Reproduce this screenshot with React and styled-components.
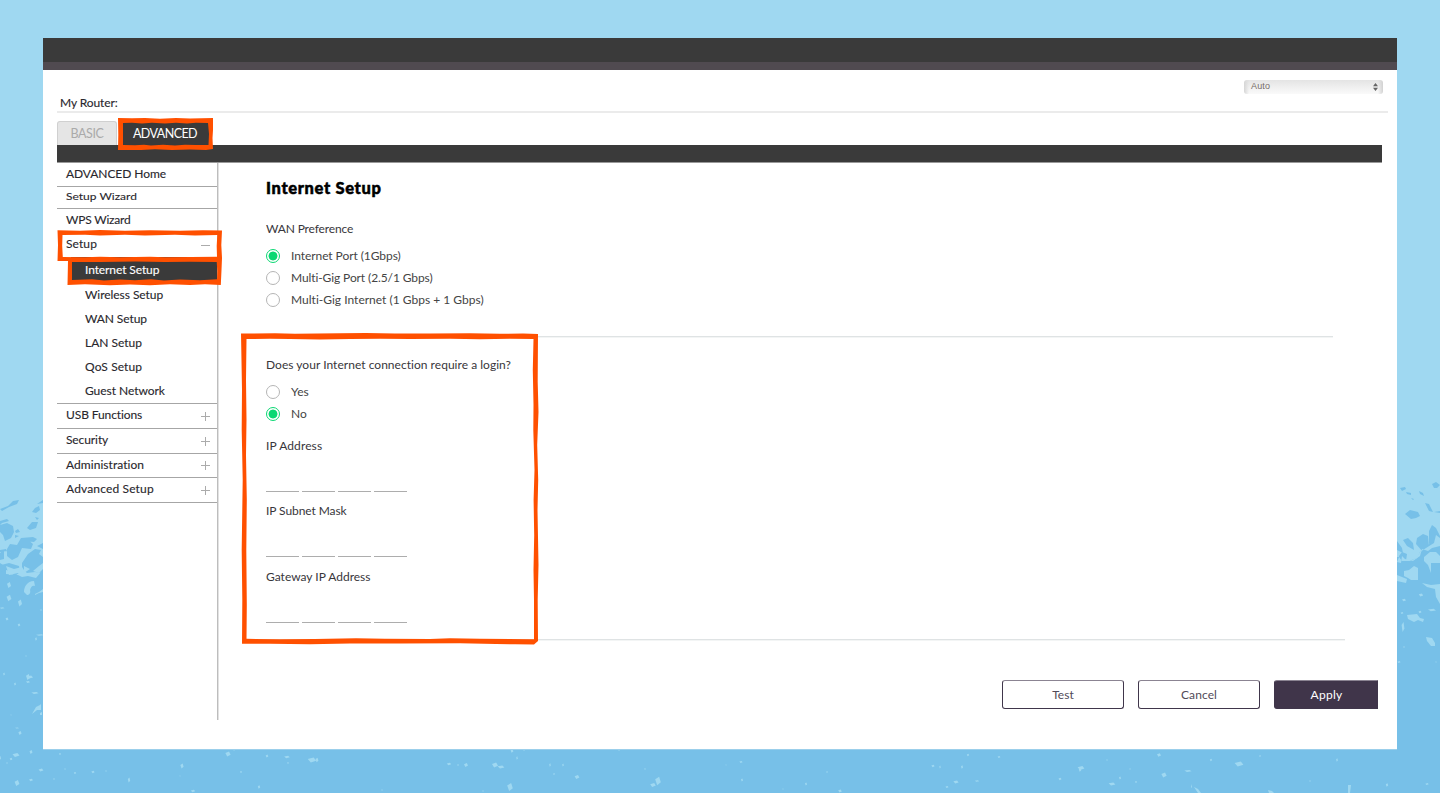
import React from "react";
import styled, { createGlobalStyle, css } from "styled-components";

const GlobalStyle = createGlobalStyle`
  *, *::before, *::after { box-sizing: border-box; }
  body { margin: 0; font-family: Lato, "Liberation Sans", sans-serif; }
`;

const ink = "#29272d";
const orange = "#ff5000";

const Scene = styled.main`
  position: relative;
  width: 1440px;
  height: 793px;
  padding: 38px 43px 44px;
  background: #9fd8f1;
  overflow: hidden;
`;

const Backdrop = styled.svg`
  position: absolute;
  inset: 0;
`;

const Frame = styled.div`
  position: relative;
  height: 711px;
  display: flex;
  flex-direction: column;
  background: #fff;
  box-shadow: 0 1px 0 #9bcfeb;
`;

const TopStrip = styled.div`
  height: 32px;
  background: #3a3a3a;
  border-bottom: 8px solid #504a50;
`;

const Header = styled.header`
  height: 43px;
  margin: 0 9px 0 14px;
  padding-top: 10px;
  display: flex;
  flex-direction: column;
  border-bottom: 2px solid #ebebeb;
`;

const LanguageSelect = styled.div`
  align-self: flex-end;
  width: 139px;
  height: 14px;
  margin-right: 5px;
  padding: 0 5px 1px 7px;
  display: flex;
  align-items: center;
  justify-content: space-between;
  border-radius: 3px;
  background: linear-gradient(90deg, #d6d6d6, transparent 5px, transparent 134px, #d2d2d2),
    linear-gradient(#e4e4e4, #fafafa);
  color: #766c68;
  font: 9px/11px "Liberation Sans", sans-serif;
`;

const LanguageValue = styled.span`
  height: 13px;
  line-height: 12px;
  letter-spacing: 0.15px;
`;

const RouterName = styled.div`
  padding-left: 3px;
  color: ${ink};
  font-size: 12px;
  line-height: 17px;
  letter-spacing: ${(p) => p.$track}px;
  -webkit-text-stroke: 0.12px ${ink};
`;

const Tabs = styled.nav`
  height: 32px;
  padding: 0 0 0 14px;
  display: flex;
  align-items: flex-end;
  gap: 3px;
`;

const Tab = styled.div`
  width: ${(p) => p.$width}px;
  height: 24px;
  display: flex;
  align-items: center;
  justify-content: center;
  font-size: 12.5px;
  letter-spacing: ${(p) => p.$track}px;
  ${(p) =>
    p.$active
      ? css`
          padding: 1px 1px 0 0;
          background: #3a3a3a;
          color: #fff;
        `
      : css`
          background: #e5e5e5;
          color: #aaa;
          border: 1px solid #d0d0d0;
          border-bottom: 0;
          border-radius: 3px 3px 0 0;
        `}
`;

const Bar = styled.div`
  height: 18px;
  margin: 0 15px 0 14px;
  background: #3a3a3a;
  border-bottom: 1px solid #999;
`;

const Body = styled.div`
  height: 557px;
  margin-left: 14px;
  display: flex;
`;

const Sidebar = styled.aside`
  width: 161px;
  border-right: 1px solid #bdbdbd;
  box-shadow: 1px 0 0 #e2e2e2;
`;

const MenuRow = styled.div`
  height: ${(p) => p.$height}px;
  padding: ${(p) => (p.$lift ? "0 7px 2px 9px" : "0 7px 1px 9px")};
  display: flex;
  align-items: center;
  justify-content: space-between;
  border-bottom: 1px solid ${(p) => (p.$line ? "#a6a6a6" : "transparent")};
  color: ${ink};
`;

const SubRow = styled.div`
  height: ${(p) => p.$height}px;
  margin-left: ${(p) => (p.$active ? 14 : 0)}px;
  padding-left: ${(p) => (p.$active ? 14 : 28)}px;
  display: flex;
  align-items: center;
  border-bottom: ${(p) => (p.$line ? "1px solid #a6a6a6" : 0)};
  background: ${(p) => (p.$active ? "#3a3a3a" : "transparent")};
  color: ${(p) => (p.$active ? "#fff" : ink)};
`;

const MenuText = styled.span`
  font-size: 12px;
  line-height: 16px;
  white-space: nowrap;
  letter-spacing: ${(p) => p.$track}px;
  -webkit-text-stroke: 0.12px currentColor;
  transform: ${(p) => (p.$flat ? "scaleY(0.82)" : "none")};
`;

const Sign = styled.svg`
  width: 9px;
  height: 9px;
  margin-top: 2px;
  stroke: #ababab;
  stroke-width: 1;
`;

const Content = styled.section`
  flex: 1;
  display: flex;
  flex-direction: column;
  padding: 15px 0 0 48px;
`;

const Title = styled.h1`
  margin: 0;
  font-size: 16.5px;
  font-weight: 900;
  line-height: 21px;
  height: 22px;
  color: #000;
  letter-spacing: ${(p) => p.$track}px;
  -webkit-text-stroke: 0.5px #000;
`;

const Label = styled.div`
  height: 16px;
  margin-top: ${(p) => p.$top}px;
  font-size: 12px;
  line-height: 16px;
  color: #38363b;
  white-space: nowrap;
  letter-spacing: ${(p) => p.$track}px;
`;

const Options = styled.div`
  margin-top: ${(p) => p.$top}px;
  display: flex;
  flex-direction: column;
`;

const Option = styled.div`
  height: 22px;
  padding-bottom: 1px;
  display: flex;
  align-items: center;
  gap: 11px;
  font-size: 12px;
  line-height: 15px;
  color: #444;
  white-space: nowrap;
  letter-spacing: ${(p) => p.$track}px;
`;

const Radio = styled.i`
  width: 14px;
  height: 14px;
  border-radius: 50%;
  border: 1px solid ${(p) => (p.$on ? "#0bd873" : "#b5b5b5")};
  background: ${(p) => (p.$on ? "radial-gradient(circle, #0bd873 4.1px, #fff 4.8px)" : "#fff")};
`;

const Rule = styled.div`
  height: 1px;
  width: ${(p) => p.$width}px;
  margin: ${(p) => p.$top}px 0 0 -23px;
  background: #dfe3e4;
  box-shadow: 0 1px 0 #f3f5f5;
`;

const Octets = styled.div`
  height: 38px;
  display: flex;
  align-items: flex-end;
  gap: 3px;
`;

const Octet = styled.span`
  width: 33px;
  height: 20px;
  border-bottom: 1px solid #adadad;
`;

const Actions = styled.div`
  margin: 40px 19px 0 0;
  display: flex;
  justify-content: flex-end;
  gap: 14px;
`;

const Button = styled.button`
  width: ${(p) => (p.$primary ? 104 : 122)}px;
  height: 29px;
  padding: 0 0 1px ${(p) => (p.$primary ? 1 : 0)}px;
  border: 1px solid #40364b;
  border-top-color: #8b8492;
  border-radius: ${(p) => (p.$primary ? "3px 0 0 3px" : "3px")};
  background: ${(p) => (p.$primary ? "#40354a" : "#fff")};
  color: ${(p) => (p.$primary ? "#fff" : "#514a58")};
  font: 12px Lato, sans-serif;
  letter-spacing: ${(p) => p.$track}px;
`;

const Marks = styled.svg`
  position: absolute;
  left: 0;
  top: 0;
  pointer-events: none;
`;

const plainItems = [
  { text: "ADVANCED Home", track: -0.07, height: 24, line: true },
  { text: "Setup Wizard", track: 0, height: 22, line: true, flat: true },
  { text: "WPS Wizard", track: -0.2, height: 24 },
  { text: "Setup", track: 0.1, height: 24, sign: "minus" },
];

const subItems = [
  { text: "Internet Setup", track: -0.1, height: 26, active: true },
  { text: "Wireless Setup", track: -0.05, height: 24 },
  { text: "WAN Setup", track: -0.1, height: 24 },
  { text: "LAN Setup", track: 0, height: 24 },
  { text: "QoS Setup", track: 0.1, height: 24 },
  { text: "Guest Network", track: -0.05, height: 25, line: true },
];

const groupItems = [
  { text: "USB Functions", track: -0.1, height: 25, line: true, sign: "plus" },
  { text: "Security", track: -0.1, height: 25, line: true, sign: "plus" },
  { text: "Administration", track: 0.05, height: 24, line: true, sign: "plus" },
  { text: "Advanced Setup", track: 0.15, height: 25, line: true, sign: "plus" },
];

function MenuItem({ item, lift }) {
  return (
    <MenuRow $height={item.height} $line={item.line} $lift={lift}>
      <MenuText $track={item.track} $flat={item.flat}>{item.text}</MenuText>
      {item.sign && (
        <Sign viewBox="0 0 9 9">
          <path d={item.sign === "plus" ? "M0 4.5H9M4.5 0V9" : "M0 4.5H9"} />
        </Sign>
      )}
    </MenuRow>
  );
}

function Choice({ on, track, children }) {
  return (
    <Option $track={track}>
      <Radio $on={on} />
      {children}
    </Option>
  );
}

function AddressField({ label, track, top }) {
  return (
    <>
      <Label $top={top} $track={track}>{label}</Label>
      <Octets>
        <Octet /><Octet /><Octet /><Octet />
      </Octets>
    </>
  );
}

// Each fleck is centre x, centre y, half width, half height.
const flecks = [
  [16, 755, 3.5, 2], [31, 752, 1.5, 2], [0, 758, 1, 2], [11, 759, 1.3, 1.3], [7, 763, 0.8, 0.8], [60, 754, 1, 1],
  [41, 770, 2.4, 1.4], [17, 783, 2.4, 3], [31, 780, 2, 1.2], [54, 779, 0.9, 0.7], [65, 769, 1, 0.5], [75, 773, 1.2, 1.1],
  [93, 772, 1.6, 1.2], [106, 771, 1, 0.6], [129, 780, 1.2, 2.4], [182, 766, 1.6, 2.4], [180, 776, 0.6, 0.6],
  [193, 791, 2.2, 1.2], [228, 754, 2.6, 2.6], [234, 750, 1, 0.6], [241, 772, 1, 1], [259, 787, 1.2, 1.8],
  [267, 756, 1.3, 1.4], [287, 757, 2.8, 1.2], [288, 763, 0.8, 1], [312, 760, 4.2, 2.4], [317, 760, 1.4, 2.2],
  [449, 764, 2.2, 1.2], [458, 765, 1, 0.8], [466, 765, 2, 2], [495, 765, 3, 2.4], [501, 767, 3.4, 1.6], [512, 751, 1.4, 1.8],
  [524, 750, 1, 0.8], [517, 758, 0.7, 1.8], [510, 787, 2.8, 4], [550, 765, 0.8, 1.8], [563, 765, 0.8, 1.4], [554, 774, 0.9, 0.9],
  [577, 777, 2.4, 2], [619, 750, 1, 0.8], [645, 769, 0.6, 1], [658, 781, 2.8, 4.2], [653, 785, 2.8, 2], [483, 791, 1, 0.6],
  [382, 790, 1, 0.5], [741, 762, 1.6, 1], [742, 780, 1, 1.6], [726, 765, 0.6, 0.6], [783, 789, 0.7, 0.5], [806, 784, 1, 1.6],
  [827, 772, 1, 0.8], [840, 791, 1.8, 1.6], [933, 766, 1.6, 1.2], [940, 767, 0.7, 1.6], [962, 767, 1, 1.8], [968, 755, 1.2, 1.2],
  [999, 757, 1.4, 1], [956, 782, 2.6, 1.6], [947, 787, 1.5, 1.1], [977, 781, 2.2, 0.8], [1081, 768, 3.4, 2], [1080, 770, 1.2, 1.8],
  [1060, 779, 1.5, 1.2], [1112, 784, 3.4, 1.6], [1120, 778, 1, 1.6], [1136, 782, 1, 1], [1107, 760, 1, 0.6], [1130, 769, 0.7, 0.7],
  [1159, 755, 2, 1.7], [1164, 775, 2.6, 2.6], [1188, 771, 3.6, 1], [1211, 760, 1.2, 1.2], [1239, 764, 4.4, 2.6], [1260, 756, 0.9, 0.9],
  [1310, 781, 0.8, 0.8], [1337, 760, 0.9, 1.8], [1387, 785, 1.2, 1.7], [1427, 784, 1.7, 0.9],
  [9, 585, 2, 3], [9, 598, 2.4, 3.2], [20, 603, 2, 3.6], [7, 619, 1.4, 1.6], [2, 608, 2.5, 0.7], [19, 625, 1.3, 1.6],
  [36, 639, 0.9, 1.8], [40, 635, 4, 0.8], [4, 674, 0.9, 1.4], [15, 684, 1, 1.5], [28, 677, 2, 3], [30, 677, 3, 1.4], [28, 682, 2, 1],
  [35, 693, 3.6, 1], [20, 733, 1.6, 2], [17, 728, 2, 0.5], [26, 656, 0.9, 0.5], [41, 610, 1.3, 0.6], [11, 715, 0.6, 0.6],
  [1404, 600, 2, 1.3], [1421, 595, 2.2, 1.6], [1432, 610, 4, 1.3], [1402, 613, 1.4, 0.9], [1403, 627, 1.4, 5],
  [1420, 612, 1.5, 1.2], [1404, 647, 0.9, 0.8], [1399, 662, 1.6, 0.9], [1436, 662, 0.8, 0.5],
];

const shards = [
  "M34 581c-7 0-10 6-10 11l3 3c2 0 4-2 3-5 1-4 3-5 5-4z",
  "M35 594l4-2 4-3v3l-4 1-4 2zM32 714l4-7 4-2 1-1v6l-4 0zM40 713l2-1v3h-2z",
  "M1426 637l6 1 3 5v3l-4 0-4-5z",
  "M1407 615l10-1 3 4 4 1-1 3-5-2-4 2-6-3z",
  "M1191 784l1 3-1 1zM1194 787l4 2 3 4h-3zM1348 793v-8l3 0-1 8zM1268 790l4 1 2 2h-5z",
];

function Speckles() {
  return (
    <Backdrop width="1440" height="793" viewBox="0 0 1440 793">
      <path
        fill="#77c0e8"
        d="M0 563l6 4v7l12 1 4 2 6-1 8 2 5-6 4-1L700 566l699-9 5-3-5 7 10 0 8-3 3-6 6-3 4-7 10 3V793H0z"
      />
      <g fill="#77c0e8">
        <path d="M0 509l8-3 5-5 6-1-2 4-8 3-7 4zM32 512l3-4 4-2 1 4-4 3zM37 504l6-4v3zM0 521l7-2 2 2-7 2-2 2zM0 525l7-2 6 3 1 6-3 6-6 3-2-6-3-3zM15 531l3-2 2 3-4 1zM27 528l5-6 6 0-2 6-6 2zM21 538l12-1 4 2-3 3-9-1zM37 546l6-3v6zM7 549l3-5 7 1 4-7 7 2 5 4-2 5-9-1-4 9-6 3-5-4zM0 550l6-1 1 2-7 1zM22 563l6-9 7-5 6 1-2 4 4 3v16l-8-1-8 1-5-4zM0 553l4-3v9l-4 1zM1 565l8-2 10 3 1 6-5 4-8-6-6 2zM15 535l4 1-4 2zM35 517l4 1-2 2z" />
        <path d="M1400 488l5-1 1 2-4 2zM1406 492l5 1v2l-4-1zM1419 491l4 2 1 3-4-2zM1432 484l4-2 4 3-3 3-3 0zM1411 498l3 1-1 1zM1405 514l5-4 8 2 2 4-4 2-5 1zM1425 503l4 1 4 8-4-1zM1434 512l6-1v2zM1429 531l3-6 4 3 4 8v9l-11-2zM1403 540l5-2 5 5 1 7-7-4zM1397 541l5 7 1 5-6-3zM1417 538l6-4 5 2 1 11-6 5-7-8zM1399 556l3-4 5 2-1 7-6 4z" />
      </g>
      <g fill="#9fd8f1">
        <path d="M6 566l8 3 8-2 4 6-8 0-9 2zM33 571l6-5 4-3v6l-4 4zM24 566l6 3-6 4z" />
        <path d="M1397 562l4 1 1-7 3 3 8 2 7-5 2-7 6 2 4-3 8-2v-8l-4-3-2 8-8 5-6 4-4 6-6 3-8 0-3-4z" />
        <path d="M1424 557l6-5 6 0 4 4v7h-9v10l-3-8-4-4zM1404 571l5-1 5-4 4 2v12l-7 0-3-2-4-2zM1397 575l10 4-1 4-9-2zM1422 583l9 2 9-1v20l-4-7-1-8-8-2z" />
        {flecks.map(([x, y, rx, ry], i) => (
          <path key={i} d={`M${x - rx} ${y - ry * 0.4}L${x + rx * 0.4} ${y - ry}L${x + rx} ${y + ry * 0.3}L${x - rx * 0.3} ${y + ry}z`} />
        ))}
        {shards.map((d) => <path key={d} d={d} />)}
      </g>
    </Backdrop>
  );
}

function Highlights() {
  return (
    <Marks width="1440" height="793" viewBox="0 0 1440 793" fill={orange} fillRule="evenodd">
      <path d="M118 118L132 118.300 145 118 160 118.700 176 118 190 118.500 213 118 213 130 212.500 138 213 149 206 150 190 149.500 172 150 155 149.300 141 150 118 150 118.300 135zM123 123V145L135 145.300 144 144.700 151 145.400 163 144.700 175 145.500 185 144.700 196 145 208.500 145 209 134 208 123 196 122.700 187 123.600 176 122.700 165 123.500 152 122.700 142 123.500 132 122.700z" />
      <path d="M57.500 230.300L80 230.700 100 230 125 230.700 150 230.200 180 230.700 203 230.200 222 230.500 221.300 245 222 258 221.500 270 220.800 285 205 284.300 190 285 170 284.300 150 285.200 130 284.600 110 285.200 85 284.300 67.500 285 68 261 57.500 261 58 245zM62.500 235L62.200 246 62.800 257 85 257.300 100 256.700 120 257.300 150 256.700 165 257.300 217 256.700 216.700 246 217.300 235 195 235.600 175 234.700 145 235.600 125 234.700 100 235.600 85 234.700zM72 262V280L92 279.300 104 280.400 120 279.400 135 280.200 151 279.300 164 280.500 180 279.600 200 280.300 217 279.300 217.300 271 216.700 262 190 261.700 165 262 135 261.400 100 262z" />
      <path d="M241 333.500L275 333.300 295 333.800 340 333.200 366 333 395 333.500 430 333.500 470 333.200 500 333.800 523 333.600 538 334 537.700 382 538.500 412 537.200 445 538.200 480 537.500 510 538.500 565 537.700 600 538 641 534 644.500 515 644.300 496 644 460 643.200 400 643.400 350 643.600 310 644.200 270 643.800 242 643.800 242.300 600 241.700 550 242.700 480 241.700 430 242 390 241.300 350zM246.500 339L246 380 246.500 420 246 455 246.800 500 246.300 550 246.800 605 246.500 638.800 280 639.300 315 639 356 638.300 385 638.700 430 639.100 450 638.300 480 638.700 534 639.300 534 600 533.500 570 534.200 535 533.600 500 534.500 470 533.300 430 533.500 405 532.800 370 533.500 339 510 338.700 480 339.300 450 338.700 410 339 380 338.700 350 339 320 339.600 290 339 270 338.700z" />
    </Marks>
  );
}

export default function App() {
  return (
    <Scene>
      <GlobalStyle />
      <Speckles />
      <Frame>
        <TopStrip />
        <Header>
          <LanguageSelect>
            <LanguageValue>Auto</LanguageValue>
            <svg width="5" height="8" viewBox="0 0 5 8" fill="#666">
              <path d="M0 3.300L2.500 0 5 3.300zM0 4.700H5L2.500 8z" />
            </svg>
          </LanguageSelect>
          <RouterName $track={-0.08}>My Router:</RouterName>
        </Header>
        <Tabs>
          <Tab $width={60} $track={-0.4}>BASIC</Tab>
          <Tab $width={91} $track={-0.55} $active>ADVANCED</Tab>
        </Tabs>
        <Bar />
        <Body>
          <Sidebar>
            {plainItems.map((item) => <MenuItem key={item.text} item={item} />)}
            {subItems.map((item) => (
              <SubRow key={item.text} $height={item.height} $active={item.active} $line={item.line}>
                <MenuText $track={item.track}>{item.text}</MenuText>
              </SubRow>
            ))}
            {groupItems.map((item) => <MenuItem key={item.text} item={item} lift />)}
          </Sidebar>
          <Content>
            <Title $track={0.65}>Internet Setup</Title>
            <Label $top={21} $track={-0.15}>WAN Preference</Label>
            <Options $top={8}>
              <Choice on track={-0.07}>Internet Port (1Gbps)</Choice>
              <Choice track={-0.1}>Multi-Gig Port (2.5/1 Gbps)</Choice>
              <Choice track={0.01}>Multi-Gig Internet (1 Gbps + 1 Gbps)</Choice>
            </Options>
            <Rule $top={25} $width={1090} />
            <Label $top={20} $track={0.03}>Does your Internet connection require a login?</Label>
            <Options $top={8}>
              <Choice track={0}>Yes</Choice>
              <Choice on track={0}>No</Choice>
            </Options>
            <AddressField label="IP Address" top={13} track={0.1} />
            <AddressField label="IP Subnet Mask" top={11} track={-0.08} />
            <AddressField label="Gateway IP Address" top={12} track={0} />
            <Rule $top={16} $width={1102} />
            <Actions>
              <Button $track={0.05}>Test</Button>
              <Button $track={0.1}>Cancel</Button>
              <Button $track={0.25} $primary>Apply</Button>
            </Actions>
          </Content>
        </Body>
      </Frame>
      <Highlights />
    </Scene>
  );
}
